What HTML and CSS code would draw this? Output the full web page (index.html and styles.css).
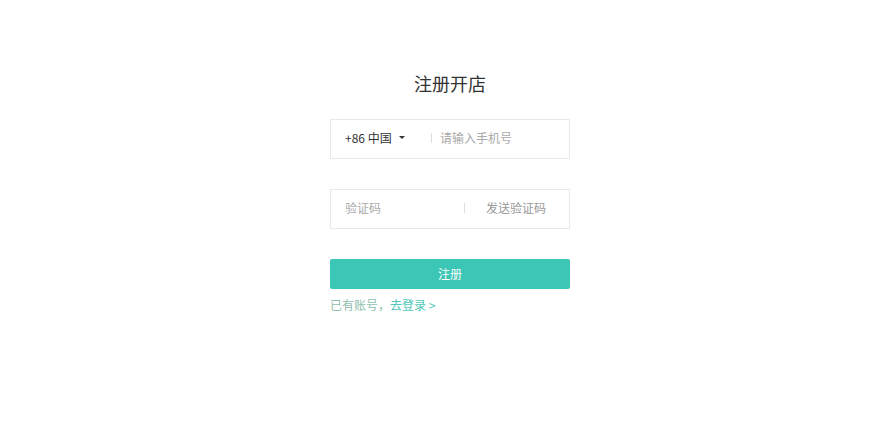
FILE: index.html
```html
<!DOCTYPE html>
<html lang="zh-CN">
<head>
<meta charset="utf-8">
<title>注册开店</title>
<link rel="stylesheet" href="styles.css">
</head>
<body>
<div class="page">
  <div class="form">
    <h1 class="title">注册开店</h1>
    <div class="field">
      <div class="country">+86 中国 <span class="caret"></span></div>
      <span class="divider"></span>
      <span class="placeholder">请输入手机号</span>
    </div>
    <div class="field field-code">
      <span class="placeholder code-ph">验证码</span>
      <span class="divider"></span>
      <span class="send">发送验证码</span>
    </div>
    <button class="submit">注册</button>
    <div class="login"><span class="login-hint">已有账号，</span><a class="login-link">去登录 &gt;</a></div>
  </div>
</div>
</body>
</html>
```
FILE: styles.css
```css
html, body {
  margin: 0;
  padding: 0;
  background: #fff;
}
body {
  font-family: "Noto Sans CJK SC", "Noto Sans", sans-serif;
  color: #333;
}
.page {
  display: flex;
  justify-content: center;
  padding-left: 28px;
  padding-top: 71px;
}
.form {
  width: 240px;
  display: flex;
  flex-direction: column;
}
.title {
  margin: 0;
  font-size: 18px;
  line-height: 24px;
  font-weight: 400;
  text-align: center;
  color: #333;
  margin-bottom: 24px;
}
.field {
  box-sizing: border-box;
  height: 40px;
  border: 1px solid #e8e8e8;
  display: flex;
  align-items: center;
  padding-left: 14px;
  padding-bottom: 3px;
  margin-bottom: 30px;
}
.country {
  font-size: 12px;
  color: #333;
  width: 86px;
  display: flex;
  align-items: center;
  line-height: 16px;
}
.caret {
  display: inline-block;
  width: 0;
  height: 0;
  border-left: 3px solid transparent;
  border-right: 3px solid transparent;
  border-top: 3px solid #333;
  margin-left: 7px;
}
.divider {
  width: 1px;
  height: 10px;
  background: #ddd;
  margin-right: 8px;
}
.placeholder {
  font-size: 12px;
  color: #aaa;
  line-height: 16px;
}
.code-ph {
  width: 119px;
}
.send {
  font-size: 12px;
  color: #999;
  margin-left: 13px;
  line-height: 16px;
}
.submit {
  height: 30px;
  border: none;
  border-radius: 2px;
  background: #3cc6b5;
  color: #fff;
  font-family: inherit;
  font-size: 12px;
  padding: 0 0 2px;
  margin: 0;
  cursor: pointer;
}
.login {
  margin-top: 7px;
  font-size: 12px;
  line-height: 18px;
}
.login-hint {
  color: #8fc0ad;
}
.login-link {
  color: #4fc8b8;
}
```
